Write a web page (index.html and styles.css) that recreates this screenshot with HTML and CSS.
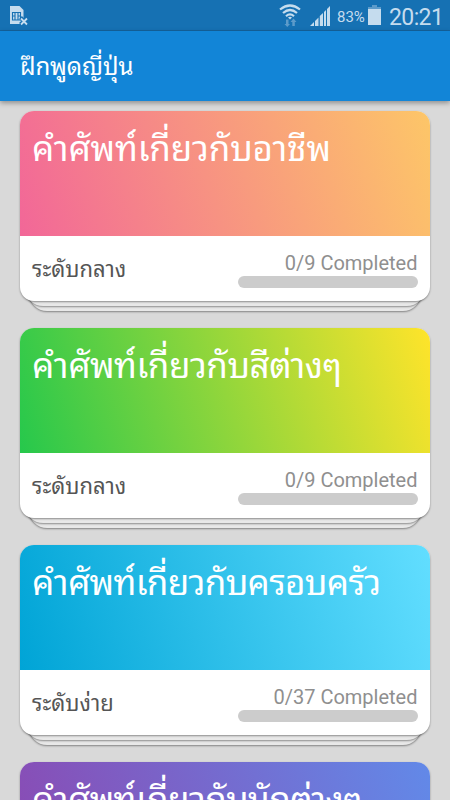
FILE: index.html
```html
<!DOCTYPE html>
<html lang="th">
<head>
<meta charset="utf-8">
<title>ฝึกพูดญี่ปุ่น</title>
<link rel="stylesheet" href="styles.css">
</head>
<body>
<div class="screen">
  <header class="status">
    <svg class="sim" width="18" height="20" viewBox="0 0 18 20"><path d="M0 0h9.500l4 4v14H0z" fill="#c5dcee"/><path d="M2.500 6.500h8v7.500h-8zM5 6.500v7.500M8 6.500v7.500M2.500 10H5M8 10h2.500" fill="none" stroke="#1671b3" stroke-width="1.100"/><path d="M10.500 11.500l7 7m0-7l-7 7" stroke="#1671b3" stroke-width="4"/><path d="M11 12.500l6 6m0-6l-6 6" stroke="#c5dcee" stroke-width="1.800"/></svg>
    <svg class="wifi" width="22" height="24" viewBox="0 0 22 24"><g fill="none" stroke="#c5dcee" stroke-width="2.200"><path d="M1 5.500q10-8 20 0"/><path d="M4 9q7-6 14 0"/><path d="M7 12.200q4-3.600 8 0"/></g><path d="M9 13.500q2-1.500 4 0L11 15.500z" fill="#c5dcee"/><path d="M7 15.500h2.500V20H11l-2.750 3L5.500 20H7zM13.300 22h2.500v-4h1.700l-3-3.500-3 3.500h1.800z" fill="#5d9bca"/></svg>
    <svg class="signal" width="20" height="20" viewBox="0 0 20 20"><path d="M0 20l4-4v4zM5 20v-5l3.500-3.500V20zM9.800 20V10L13 7v13zM14 20V6l2-2v16zM17 20V3l3-3v20z" fill="#c5dcee"/></svg>
    <span class="percent">83%</span>
    <svg class="battery" width="13" height="20" viewBox="0 0 13 20"><path d="M4 0h5v2h4v3H0V2h4z" fill="#5d9bca"/><path d="M0 4h13v16H0z" fill="#c5dcee"/></svg>
    <time class="clock">20:21</time>
  </header>
  <div class="appbar"><h1>ฝึกพูดญี่ปุ่น</h1></div>
  <main class="list">
    <article class="stack"><div class="card"><h2 class="cover pink">คำศัพท์เกี่ยวกับอาชีพ</h2><div class="info"><span class="level">ระดับกลาง</span><div class="progress"><span>0/9 Completed</span><div class="track"></div></div></div></div><div class="sheet"></div><div class="sheet last"></div></article>
    <article class="stack"><div class="card"><h2 class="cover green">คำศัพท์เกี่ยวกับสีต่างๆ</h2><div class="info"><span class="level">ระดับกลาง</span><div class="progress"><span>0/9 Completed</span><div class="track"></div></div></div></div><div class="sheet"></div><div class="sheet last"></div></article>
    <article class="stack"><div class="card"><h2 class="cover blue">คำศัพท์เกี่ยวกับครอบครัว</h2><div class="info"><span class="level">ระดับง่าย</span><div class="progress"><span>0/37 Completed</span><div class="track"></div></div></div></div><div class="sheet"></div><div class="sheet last"></div></article>
    <article class="stack"><div class="card"><h2 class="cover purple">คำศัพท์เกี่ยวกับนักต่างๆ</h2></div></article>
  </main>
</div>
</body>
</html>
```
FILE: styles.css
```css
* { box-sizing: border-box; }
body { margin: 0; font-family: Roboto, "Droid Sans Thai", "Noto Sans Thai Looped", "Noto Looped Thai", Loma, Waree, Umpush, Garuda, "Noto Sans Thai", sans-serif; }
.screen { width: 450px; height: 800px; overflow: hidden; background: #d9d9d9; display: flex; flex-direction: column; }
.status { height: 31px; flex: none; display: flex; align-items: flex-start; padding: 6px 8px 0 10px; background: #1671b3; color: #c5dcee; border-bottom: 1px solid #14639e; }
.status svg { flex: none; }
.wifi { margin: -2px 0 0 251px; }
.signal { margin-left: 9px; }
.percent { font-size: 15px; line-height: 22px; width: 27px; margin-left: 7px; white-space: nowrap; }
.battery { margin-left: 4px; margin-top: -1px; }
.clock { font-size: 23px; line-height: 24px; margin-left: 8px; letter-spacing: -.6px; white-space: nowrap; }
.appbar { height: 70px; flex: none; position: relative; display: flex; align-items: center; padding: 2px 0 0 20px; background: #1285d7; box-shadow: 0 2px 5px rgba(0,0,0,.35); }
h1 { margin: 0; color: #fff; font-size: 24px; font-weight: 400; line-height: 36px; letter-spacing: -.1px; white-space: nowrap; }
.list { padding: 10px 20px 0; display: flex; flex-direction: column; gap: 17px; }
.stack { height: 200px; flex: none; }
.card { height: 190px; position: relative; z-index: 3; background: #fff; border-radius: 14px; overflow: hidden; box-shadow: 0 1px 2px rgba(0,0,0,.4); }
.sheet { position: relative; z-index: 2; height: 25px; margin: -20px 5px 0; background: #e8e8e8; border-radius: 0 0 18px 18px; box-shadow: 0 1px 2px rgba(0,0,0,.4); }
.sheet.last { z-index: 1; margin: -20px 9px 0; }
.cover { height: 125px; margin: 0; padding: 13px 12px 0; color: #fff; font-size: 35px; font-weight: 400; line-height: 52px; white-space: nowrap; }
.pink { letter-spacing: -.15px; background: linear-gradient(73deg, #f26798, #fdc668); }
.green { letter-spacing: -.45px; background: linear-gradient(73deg, #26c84c, #ffe42a); }
.blue { letter-spacing: -.65px; background: linear-gradient(73deg, #00a4d6, #62deff); }
.purple { letter-spacing: -.6px; background: linear-gradient(73deg, #8a4ab3, #6289e8); }
.info { height: 65px; padding: 0 12.500px 0 12px; display: flex; justify-content: space-between; }
.level { color: #555; font-size: 22px; line-height: 34px; padding-top: 17px; white-space: nowrap; }
.progress { width: 180px; padding-top: 15px; color: #8f8f8f; font-size: 20px; line-height: 25px; display: flex; flex-direction: column; text-align: right; }
.track { height: 12px; border-radius: 6px; background: #ccc; }
```
